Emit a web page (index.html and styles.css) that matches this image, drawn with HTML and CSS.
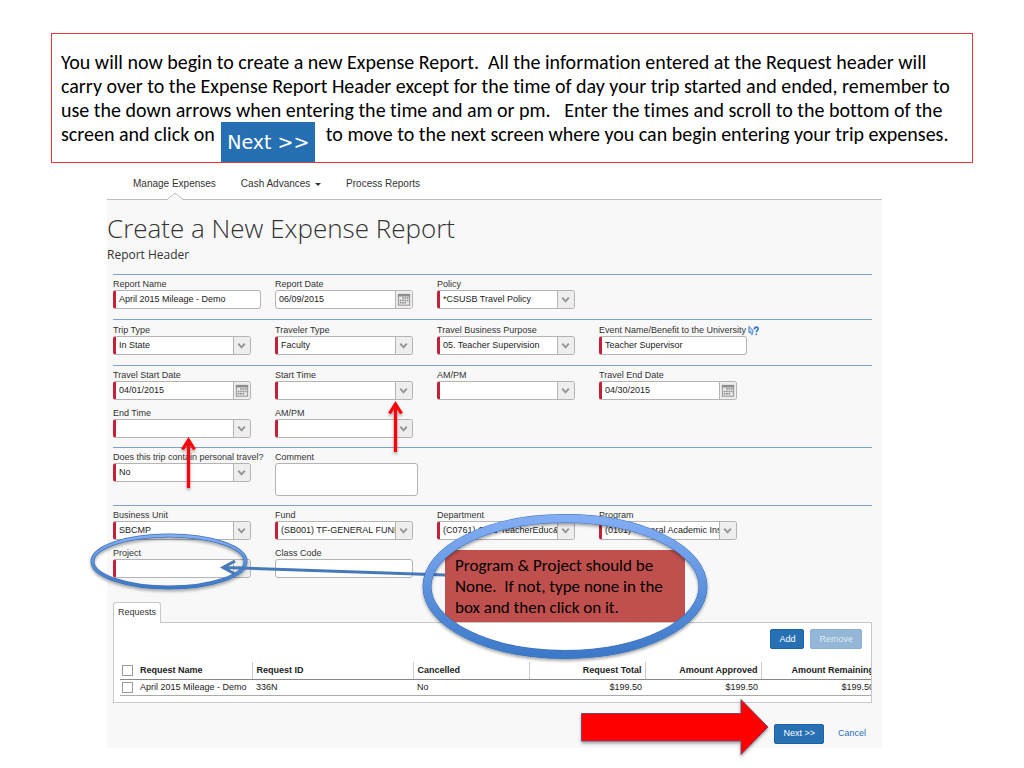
FILE: index.html
```html
<!DOCTYPE html>
<html lang="en">
<head>
<meta charset="utf-8">
<title>Create a New Expense Report</title>
<link rel="stylesheet" href="styles.css">
</head>
<body>
<svg class="defs" width="0" height="0" aria-hidden="true">
  <defs>
    <symbol id="chevron" viewBox="0 0 17 17"><path d="M4.500 6.500l3.500 4 3.500-4" fill="none" stroke="#949494" stroke-width="2"/></symbol>
    <symbol id="calendar" viewBox="0 0 17 17">
      <rect x="2.500" y="3" width="12" height="11.500" fill="#e9e9e9" stroke="#8d8d8d"/>
      <path d="M2 4h13" stroke="#8d8d8d" stroke-width="2.500"/>
      <path d="M6.500 7h7M4 9.500h9.500M4 12h7" stroke="#8d8d8d" stroke-width="1.600" stroke-dasharray="1.800 .7"/>
    </symbol>
  </defs>
</svg>
<div class="slide">
  <p class="notice">You will now begin to create a new Expense Report.&nbsp; All the information entered at the Request header will<br>
carry over to the Expense Report Header except for the time of day your trip started and ended, remember to<br>
use the down arrows when entering the time and am or pm.&nbsp;&nbsp; Enter the times and scroll to the bottom of the<br>
screen and click on <span class="notice-next">Next &gt;&gt;</span> to move to the next screen where you can begin entering your trip expenses.</p>

  <main class="app">
    <nav class="tabs">
      <a class="tab active" href="#">Manage Expenses<svg class="notch" viewBox="0 0 16 8" aria-hidden="true"><path d="M0 8L8 1l8 7z" fill="#f8f8f8"/><path d="M0 7.500L8 1l8 6.500" fill="none" stroke="#bdbdbd"/></svg></a>
      <a class="tab" href="#">Cash Advances <span class="caret"></span></a>
      <a class="tab" href="#">Process Reports</a>
    </nav>

    <form class="report">
      <h1>Create a New Expense Report</h1>
      <h2>Report Header</h2>

      <div class="rows">
        <div class="row">
          <div class="field wide"><label for="name">Report Name</label>
            <span class="control required"><input id="name" type="text" value="April 2015 Mileage - Demo"></span></div>
          <div class="field"><label for="date">Report Date</label>
            <span class="control"><input id="date" type="text" value="06/09/2015"><svg class="addon"><use href="#calendar"/></svg></span></div>
          <div class="field"><label for="policy">Policy</label>
            <span class="control required"><select id="policy"><option>*CSUSB Travel Policy</option></select><svg class="addon"><use href="#chevron"/></svg></span></div>
        </div>

        <div class="row trip">
          <div class="field"><label for="trip">Trip Type</label>
            <span class="control required"><select id="trip"><option>In State</option></select><svg class="addon"><use href="#chevron"/></svg></span></div>
          <div class="field"><label for="traveler">Traveler Type</label>
            <span class="control required"><select id="traveler"><option>Faculty</option></select><svg class="addon"><use href="#chevron"/></svg></span></div>
          <div class="field"><label for="purpose">Travel Business Purpose</label>
            <span class="control required"><select id="purpose"><option>05. Teacher Supervision</option></select><svg class="addon"><use href="#chevron"/></svg></span></div>
          <div class="field wide"><label for="event">Event Name/Benefit to the University<svg class="help" viewBox="0 0 12 11" aria-hidden="true"><path d="M1 1v7l1.500-1L4 10l1-.5L4.500 7 6 6z" fill="#bcd6f2" stroke="#3f7fc4"/><path d="M7 4.500c0-3.500 4-3.500 4-.8C11 5.500 9 5.500 9 7.500M9 8.800v1.700" fill="none" stroke="#2f79c6" stroke-width="1.800"/></svg></label>
            <span class="control required"><input id="event" type="text" value="Teacher Supervisor"></span></div>
        </div>

        <div class="row">
          <div class="field"><label for="start">Travel Start Date</label>
            <span class="control required"><input id="start" type="text" value="04/01/2015"><svg class="addon"><use href="#calendar"/></svg></span></div>
          <div class="field"><label for="stime">Start Time</label>
            <span class="control required"><select id="stime"><option></option></select><svg class="addon"><use href="#chevron"/></svg></span></div>
          <div class="field"><label for="sampm">AM/PM</label>
            <span class="control required"><select id="sampm"><option></option></select><svg class="addon"><use href="#chevron"/></svg></span></div>
          <div class="field"><label for="end">Travel End Date</label>
            <span class="control required"><input id="end" type="text" value="04/30/2015"><svg class="addon"><use href="#calendar"/></svg></span></div>
          <div class="field"><label for="etime">End Time</label>
            <span class="control required"><select id="etime"><option></option></select><svg class="addon"><use href="#chevron"/></svg></span></div>
          <div class="field"><label for="eampm">AM/PM</label>
            <span class="control required"><select id="eampm"><option></option></select><svg class="addon"><use href="#chevron"/></svg></span></div>
        </div>

        <div class="row">
          <div class="field"><label for="personal">Does this trip contain personal travel?</label>
            <span class="control required"><select id="personal"><option>No</option></select><svg class="addon"><use href="#chevron"/></svg></span></div>
          <div class="field area"><label for="comment">Comment</label>
            <textarea id="comment"></textarea></div>
        </div>

        <div class="row">
          <div class="field"><label for="unit">Business Unit</label>
            <span class="control required"><select id="unit"><option>SBCMP</option></select><svg class="addon"><use href="#chevron"/></svg></span></div>
          <div class="field"><label for="fund">Fund</label>
            <span class="control required"><select id="fund"><option>(SB001) TF-GENERAL FUND</option></select><svg class="addon"><use href="#chevron"/></svg></span></div>
          <div class="field"><label for="dept">Department</label>
            <span class="control required"><select id="dept"><option>(C0761) COE-TeacherEduc&amp;Foundations</option></select><svg class="addon"><use href="#chevron"/></svg></span></div>
          <div class="field"><label for="program">Program</label>
            <span class="control required"><select id="program"><option>(0101) General Academic Instruction</option></select><svg class="addon"><use href="#chevron"/></svg></span></div>
          <div class="field"><label for="project">Project</label>
            <span class="control required"><select id="project"><option></option></select><svg class="addon"><use href="#chevron"/></svg></span></div>
          <div class="field"><label for="class">Class Code</label>
            <span class="control"><input id="class" type="text"></span></div>
        </div>
      </div>

      <section class="requests">
        <a class="panel-tab" href="#">Requests</a>
        <div class="panel">
          <div class="actions">
            <button class="btn" type="button">Add</button>
            <button class="btn" type="button" disabled>Remove</button>
          </div>
          <table>
            <colgroup><col class="c-check"><col class="c-name"><col class="c-id"><col class="c-amt"><col class="c-amt"><col class="c-amt"><col class="c-amt"></colgroup>
            <thead>
              <tr><th class="check"><input type="checkbox" aria-label="Select all"></th><th class="first">Request Name</th><th>Request ID</th><th>Cancelled</th><th class="num">Request Total</th><th class="num">Amount Approved</th><th class="num">Amount Remaining</th></tr>
            </thead>
            <tbody>
              <tr><td class="check"><input type="checkbox" aria-label="Select April 2015 Mileage - Demo"></td><td>April 2015 Mileage - Demo</td><td>336N</td><td>No</td><td class="num">$199.50</td><td class="num">$199.50</td><td class="num">$199.50</td></tr>
            </tbody>
          </table>
        </div>
      </section>

      <footer class="footer">
        <button class="btn" type="button">Next &gt;&gt;</button>
        <a href="#">Cancel</a>
      </footer>
    </form>
  </main>

  <svg class="marks" width="1024" height="768" viewBox="0 0 1024 768" aria-hidden="true">
    <defs>
      <linearGradient id="ring" x1="0" y1="0" x2="0" y2="1"><stop offset="0" stop-color="#82adf5"/><stop offset="1" stop-color="#3c79c8"/></linearGradient>
      <filter id="shade" x="-20%" y="-20%" width="140%" height="150%"><feDropShadow dx="0" dy="2" stdDeviation="1.500" flood-opacity=".35"/></filter>
    </defs>
    <ellipse cx="169" cy="561.500" rx="76.500" ry="26" fill="none" stroke="#3f72b4" stroke-width="4" filter="url(#shade)"/>
    <ellipse cx="169" cy="561.500" rx="76.500" ry="26" fill="none" stroke="url(#ring)" stroke-width="2.500"/>
    <path d="M445 575L224 567.500M235 561l-12 6.500L235 574" fill="none" stroke="#4579b8" stroke-width="3"/>
    <g fill="none" stroke="#fb0007" stroke-width="3.200" filter="url(#shade)">
      <path d="M188.500 488V441M182.500 449.500l6-9.500 6 9.500"/>
      <path d="M395.500 452V405M389.500 413.500l6-9.500 6 9.500"/>
    </g>
    <path d="M581.500 713.500H741V699.500L768 727l-27 27.500V741H581.500z" fill="#fe0000" stroke="#7a4470" filter="url(#shade)"/>
  </svg>
  <p class="callout">Program &amp; Project should be<br>None.&nbsp; If not, type none in the<br>box and then click on it.</p>
  <svg class="marks" width="1024" height="768" viewBox="0 0 1024 768" aria-hidden="true">
    <ellipse cx="565" cy="586.500" rx="138" ry="68" fill="none" stroke="#3d70b3" stroke-width="9" filter="url(#shade)"/>
    <ellipse cx="565" cy="586.500" rx="138" ry="68" fill="none" stroke="url(#ring)" stroke-width="8"/>
  </svg>
</div>
</body>
</html>
```
FILE: styles.css
```css
* { box-sizing: border-box; }
body {
  margin: 0;
  background: #fff;
  color: #333;
  font: 9px/11px "Liberation Sans", Arial, sans-serif;
}
.defs { position: absolute; }
.slide { position: relative; padding: 33px 51px 20px; }

.notice {
  margin: 0;
  padding: 16px 9px;
  border: 1px solid #e0383c;
  color: #000;
  font: 20px/24px Carlito, Calibri, Lato, sans-serif;
  font-variant-ligatures: none;
  white-space: nowrap;
}
.notice-next {
  display: inline-flex;
  align-items: center;
  justify-content: center;
  width: 94px;
  height: 40px;
  margin: 0 6px -16px 2px;
  vertical-align: top;
  background: #266fb2;
  color: #fff;
  font: 19px/24px "DejaVu Sans", sans-serif;
}

.app { margin: 12px 91px 0 56px; }
.tabs {
  display: flex;
  gap: 25px;
  height: 25px;
  padding-left: 26px;
  border-bottom: 1px solid #bdbdbd;
  font-size: 10px;
  line-height: 17px;
}
.tab { position: relative; color: #333; text-decoration: none; }
.notch { position: absolute; left: 34px; top: 17px; width: 16px; height: 8px; }
.caret {
  display: inline-block;
  margin-left: 2px;
  vertical-align: 1px;
  border: 3px solid transparent;
  border-top-color: #333;
  border-bottom: 0;
}

.report { padding: 8px 10px 4px 6px; background: #f8f8f8; }
h1, h2 { margin: 0 0 0 -6px; font-family: "Open Sans", sans-serif; }
h1 { font-size: 26px; line-height: 40px; font-weight: 300; }
h2 { font-size: 12px; line-height: 13px; font-weight: 400; padding-bottom: 13px; }

.row {
  display: grid;
  grid-template-columns: repeat(4, 162px);
  row-gap: 8px;
  padding: 4px 0 9px;
  border-top: 1px solid #7ba3d0;
}
.row:first-child { padding-bottom: 10px; }
.row.trip { padding: 5px 0 10px; }
.field { width: 138px; }
.field.wide { width: 148px; }
.field.area { width: 143px; }
.field label { display: block; height: 11px; white-space: nowrap; }
.help { width: 11px; height: 11px; margin-left: 2px; vertical-align: top; }
.control {
  display: flex;
  height: 19px;
  border: 1px solid #b4b4b4;
  border-radius: 3px;
  background: #fff;
  overflow: hidden;
}
.control.required { border-left: 3px solid #c3203a; }
.control input, .control select {
  flex: 1;
  min-width: 0;
  padding: 0 0 0 3px;
  border: 0;
  background: none;
  color: #222;
  font: inherit;
  appearance: none;
  text-overflow: clip;
}
.addon { flex: none; width: 17px; height: 17px; border-left: 1px solid #b4b4b4; background: #eee; }
textarea {
  display: block;
  width: 100%;
  height: 33px;
  border: 1px solid #b4b4b4;
  border-radius: 3px;
  resize: none;
  font: inherit;
}

.requests { margin-top: 15px; }
.panel-tab {
  display: block;
  position: relative;
  width: 48px;
  height: 21px;
  margin-bottom: -1px;
  border: 1px solid #c8c8c8;
  border-bottom: 0;
  border-radius: 3px 3px 0 0;
  background: #fff;
  color: #333;
  line-height: 19px;
  text-align: center;
  text-decoration: none;
}
.panel { padding: 6px 0 6px 6px; border: 1px solid #c8c8c8; background: #fff; overflow: hidden; }
.actions { display: flex; justify-content: flex-end; gap: 6px; padding-right: 9px; margin-bottom: 13px; }
.btn {
  height: 20px;
  padding: 0 8px;
  border: 1px solid #1d62a3;
  border-radius: 2px;
  background: #2770b4;
  color: #fff;
  font: 9px/11px "Liberation Sans", Arial, sans-serif;
}
.btn:disabled { border-color: #8aafd3; background: #94b6d7; color: #dce9f5; }

table { width: 757px; table-layout: fixed; border-collapse: collapse; color: #222; }
.c-check { width: 16px; }
.c-name { width: 116px; }
.c-id { width: 161px; }
.c-amt { width: 116px; }
th, td { height: 16px; padding: 0 3px 0 4px; text-align: left; white-space: nowrap; border-bottom: 1px solid #aaa; }
th { height: 17px; border-left: 1px solid #ccc; border-bottom-color: #888; }
th.check, th.first { border-left: 0; }
.check { padding: 0; }
.num { text-align: right; }
.check input {
  display: block;
  width: 11px;
  height: 11px;
  margin: 0 0 0 2px;
  border: 1px solid #999;
  background: #fff;
  appearance: none;
}

.footer { display: flex; justify-content: flex-end; align-items: center; gap: 14px; padding: 21px 6px 0 0; }
.footer a { color: #2770b4; text-decoration: none; }

.marks { position: absolute; left: 0; top: 0; pointer-events: none; }
.callout {
  position: absolute;
  left: 445px;
  top: 550px;
  width: 240px;
  margin: 0;
  padding: 5px 10px 4px;
  background: #c0504d;
  color: #000;
  font: 17px/21px Carlito, Calibri, Lato, sans-serif;
  font-variant-ligatures: none;
  white-space: nowrap;
}
```
